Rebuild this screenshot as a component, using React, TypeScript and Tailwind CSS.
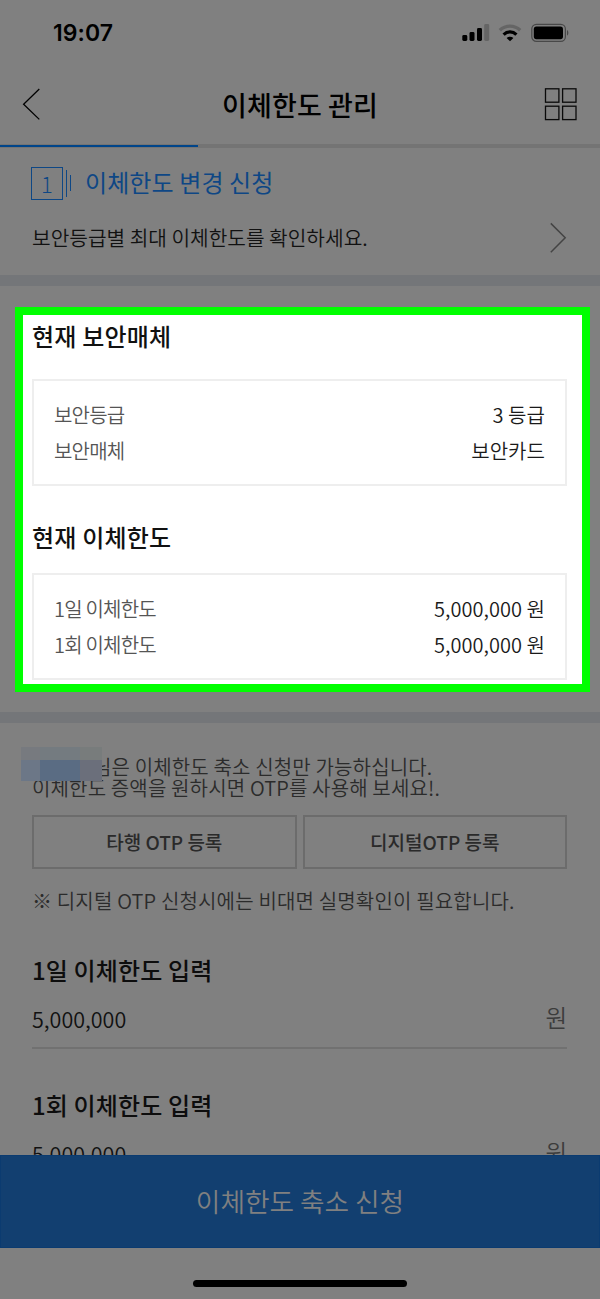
import React from "react";

type InfoRow = {
  label: string;
  value: string;
};

const securityRows: InfoRow[] = [
  { label: "보안등급", value: "3 등급" },
  { label: "보안매체", value: "보안카드" },
];

const limitRows: InfoRow[] = [
  { label: "1일 이체한도", value: "5,000,000 원" },
  { label: "1회 이체한도", value: "5,000,000 원" },
];

const StatusBar = () => (
  <div className="flex h-[66px] items-center justify-between pr-[31px] pl-[53px]">
    <span className="font-['Inter',sans-serif] text-[23px] leading-[30px] font-semibold tracking-[0.05px] text-black">
      19:07
    </span>
    <div className="flex items-center">
      {/* Cellular signal */}
      <svg width="28" height="18" viewBox="0 0 28 18">
        <rect x="0.3" y="11" width="5" height="6" rx="1.4" />
        <rect x="7.5" y="8" width="5" height="9" rx="1.4" />
        <rect x="15" y="4" width="5" height="13" rx="1.4" />
        <rect x="22.2" y="0" width="5" height="17" rx="1.4" fill="#656565" />
      </svg>
      {/* Wifi */}
      <svg className="ml-2" width="24" height="18" viewBox="0 0 24 18" fill="none">
        <path d="M1.8 6.2C7.6 0.7 16.4 0.7 22.2 6.2" stroke="#656565" strokeWidth="3.4" />
        <path d="M5.6 10.6C9.3 7 14.7 7 18.4 10.6" stroke="#000" strokeWidth="3.2" />
        <path d="M12 17.2L8.6 14C10.5 12.3 13.5 12.3 15.4 14Z" fill="#000" />
      </svg>
      {/* Battery */}
      <svg className="ml-[9px]" width="38" height="20" viewBox="0 0 38 20">
        <rect x="0.8" y="1.3" width="33.6" height="17" rx="4.6" fill="none" stroke="#484848" strokeWidth="1.2" />
        <rect x="2.8" y="3.6" width="29.2" height="12.6" rx="2.6" />
        <path d="M36 7C37.8 7.6 37.8 12 36 12.6Z" fill="#484848" />
      </svg>
    </div>
  </div>
);

const Header = () => (
  <header className="flex h-[78px] items-center justify-between pr-[22px] pl-[22px]">
    <svg width="34" height="34" viewBox="0 0 34 34" fill="none" stroke="#000" strokeWidth="1.3">
      <path d="M17.3 1L1.6 16.2L17.3 31.4" />
    </svg>
    <h1 className="text-[27px] leading-[38px] font-medium tracking-[0.15px] text-black">
      이체한도 관리
    </h1>
    <svg width="34" height="34" viewBox="0 0 34 34" fill="none" stroke="#0a0a0a" strokeWidth="1.3">
      <rect x="1.5" y="0.8" width="13.4" height="13.4" />
      <rect x="18.6" y="0.8" width="13.4" height="13.4" />
      <rect x="1.5" y="18.2" width="13.4" height="13.4" />
      <rect x="18.6" y="18.2" width="13.4" height="13.4" />
    </svg>
  </header>
);

const InfoBox = ({ rows }: { rows: InfoRow[] }) => (
  <dl className="flex h-[107px] flex-col justify-center border-2 border-[#eeeeee] px-5 pt-px">
    {rows.map((row) => (
      <div key={row.label} className="flex h-[36.5px] items-center justify-between text-[20px] leading-9">
        <dt className="font-[350] tracking-[-0.8px] text-[#555555]">{row.label}</dt>
        <dd className="font-[350] tracking-[0.05px] text-[#1a1a1a]">{row.value}</dd>
      </div>
    ))}
  </dl>
);

const AmountField = ({ title }: { title: string }) => (
  <div className="h-[135px]">
    <h2 className="h-9 text-[24px] leading-9 font-medium tracking-[0.15px] text-[#0d0d0d]">{title}</h2>
    <div className="mt-[11px] flex h-[50px] justify-between border-b-2 border-[#717171]">
      <span className="text-[21.5px] leading-10 font-[350] text-[#111111]">5,000,000</span>
      <span className="text-[23.5px] leading-9 font-[350] text-[#3c3c3c]">원</span>
    </div>
  </div>
);

const App = () => {
  return (
    <div className="flex h-[1299px] w-[600px] flex-col overflow-hidden bg-[#808080] font-['Noto_Sans_CJK_KR',sans-serif] whitespace-nowrap">
      <StatusBar />
      <Header />

      {/* Step progress */}
      <div className="h-1 shrink-0 bg-[#747474] pt-px">
        <div className="h-0.5 w-[198px] bg-[#00458a]" />
      </div>

      {/* Step title */}
      <section className="h-[127px] shrink-0 px-8 pt-[17px]">
        <div className="-ml-px flex h-9 items-center">
          <div className="flex h-[33px] w-8 items-center justify-center border border-[#0e4785] text-[22px] leading-8 font-light text-[#0e4785]">
            1
          </div>
          <div className="ml-[3px] h-[27px] w-px bg-[#0e4785]" />
          <div className="ml-[3px] h-4 w-px bg-[#0e4785]" />
          <h2 className="-mt-0.5 ml-[14px] text-[24px] leading-9 tracking-[0.1px] text-[#0e4785]">
            이체한도 변경 신청
          </h2>
        </div>
        <div className="mt-[18px] flex h-9 items-center justify-between">
          <p className="pt-0.5 text-[20.25px] leading-9 font-[350] text-[#111111]">
            보안등급별 최대 이체한도를 확인하세요.
          </p>
          <svg className="mr-px" width="18" height="32" viewBox="0 0 18 32" fill="none" stroke="#444" strokeWidth="1.5">
            <path d="M1.8 2.4L16.2 16.8L1.8 31.2" />
          </svg>
        </div>
      </section>
      <div className="h-[11px] shrink-0 bg-[#747679]" />

      {/* Highlighted account limits */}
      <section className="mt-[21px] mr-[10px] ml-[15px] h-[385px] shrink-0 border-8 border-[#00ff00] bg-white pr-[15px] pl-[9px]">
        <h2 className="mt-[3px] mb-[25px] h-9 text-[24px] leading-9 font-medium tracking-[0.2px] text-[#111111]">
          현재 보안매체
        </h2>
        <InfoBox rows={securityRows} />
        <h2 className="mt-[33px] mb-[18px] h-9 text-[24px] leading-9 font-medium tracking-[0.2px] text-[#111111]">
          현재 이체한도
        </h2>
        <InfoBox rows={limitRows} />
      </section>
      <div className="mt-5 h-[11px] shrink-0 bg-[#747679]" />

      <section className="min-h-0 flex-1 overflow-hidden pt-[33px] pr-[33px] pl-8">
        <div className="relative text-[20px] leading-[21px] font-[350] text-[#2b2b2b]">
          <p className="pl-[61px] tracking-[0.15px]">님은 이체한도 축소 신청만 가능하십니다.</p>
          <p className="tracking-[0.15px]">이체한도 증액을 원하시면 OTP를 사용해 보세요!.</p>
          {/* Masked user name */}
          <div className="absolute top-[-9px] left-[-11px] grid h-[34px] w-[81px] grid-cols-[19px_40px_22px] grid-rows-[13px_21px]">
            <span className="bg-[#777a7f]" />
            <span className="bg-[#747b80]" />
            <span className="bg-[#787c7c]" />
            <span className="bg-[#6c7787]" />
            <span className="bg-[#5a6c83]" />
            <span className="bg-[#6b6f7b]" />
          </div>
        </div>
        <div className="mt-[17px] grid grid-cols-2 gap-1.5">
          <button className="h-[54px] border-2 border-[#6c6c6c] text-[19px] font-medium text-[#2a2a2a]">
            타행 OTP 등록
          </button>
          <button className="h-[54px] border-2 border-[#6c6c6c] text-[19px] font-medium text-[#2a2a2a]">
            디지털OTP 등록
          </button>
        </div>
        <p className="mt-[14px] mb-[33px] h-9 text-[20px] leading-9 font-[350] tracking-[0.17px] text-[#2b2b2b]">
          ※ 디지털 OTP 신청시에는 비대면 실명확인이 필요합니다.
        </p>
        <AmountField title="1일 이체한도 입력" />
        <AmountField title="1회 이체한도 입력" />
      </section>

      <button className="h-[93px] shrink-0 border border-[#0b3b70] bg-[#123f70] text-[26.7px] font-[350] text-[#808080]">
        이체한도 축소 신청
      </button>
      <div className="flex h-[51px] shrink-0 justify-center pt-[32px]">
        <div className="h-[7px] w-[214px] rounded-full bg-black" />
      </div>
    </div>
  );
};

export default App;
